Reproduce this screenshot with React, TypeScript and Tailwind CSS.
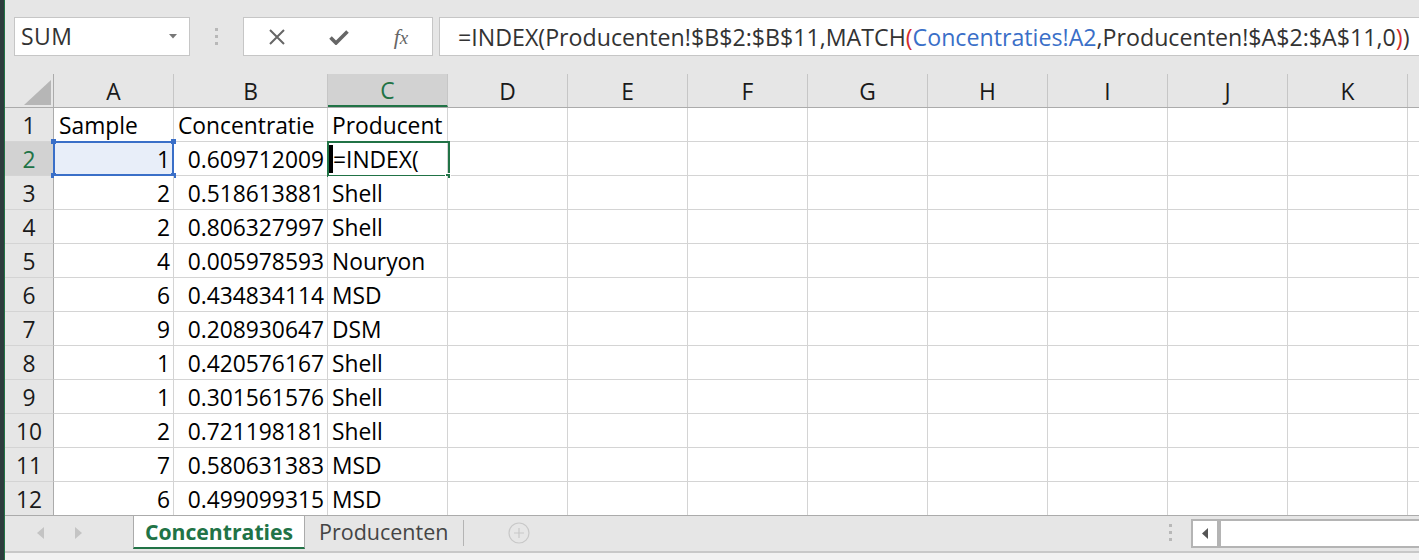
import React from 'react'

// sheet data
const rows: [number | string, string, string][] = [
  ['Sample', 'Concentratie', 'Producent'],
  [1, '0.609712009', '=INDEX('],
  [2, '0.518613881', 'Shell'],
  [2, '0.806327997', 'Shell'],
  [4, '0.005978593', 'Nouryon'],
  [6, '0.434834114', 'MSD'],
  [9, '0.208930647', 'DSM'],
  [1, '0.420576167', 'Shell'],
  [1, '0.301561576', 'Shell'],
  [2, '0.721198181', 'Shell'],
  [7, '0.580631383', 'MSD'],
  [6, '0.499099315', 'MSD'],
]

const colLetters = ['A', 'B', 'C', 'D', 'E', 'F', 'G', 'H', 'I', 'J', 'K']
const colWidths = ['w-[120px]', 'w-[154px]', 'w-[120px]', 'w-[120px]', 'w-[120px]', 'w-[120px]', 'w-[120px]', 'w-[120px]', 'w-[120px]', 'w-[120px]', 'w-[120px]']

const cellFont = "font-['Open_Sans',sans-serif] text-[22.8px]"
const uiFont = "font-['Open_Sans',sans-serif]"

const Toolbar = (): JSX.Element => (
  <div className="h-[74px] flex items-start pt-[17px] pl-[9px] bg-[#e6e6e6]">
    {/* name box */}
    <div className="w-[176px] h-[39px] bg-white border border-[#c6c6c6] flex items-center justify-between pl-[6px] pr-[12px]">
      <span className={`${uiFont} text-[23px] text-[#333] tracking-[0.4px]`}>SUM</span>
      <svg width="8" height="5" viewBox="0 0 8 5">
        <path d="M0 0 L8 0 L4 4.5 Z" fill="#777" />
      </svg>
    </div>
    {/* grip dots */}
    <div className="w-[53px] h-[39px] flex flex-col items-center justify-center gap-[4px]">
      <div className="w-[3px] h-[3px] bg-[#b8b8b8]" />
      <div className="w-[3px] h-[3px] bg-[#b8b8b8]" />
      <div className="w-[3px] h-[3px] bg-[#b8b8b8]" />
    </div>
    {/* cancel / enter / fx */}
    <div className="w-[190px] h-[39px] bg-white border border-[#c6c6c6] flex items-center">
      <div className="w-[64px] flex justify-center pl-[2px]">
        <svg width="18" height="18" viewBox="0 0 18 18">
          <path d="M2 2 L16 16 M16 2 L2 16" stroke="#666" strokeWidth="2" />
        </svg>
      </div>
      <div className="w-[62px] flex justify-center">
        <svg width="20" height="16" viewBox="0 0 20 16">
          <path d="M1.5 8.5 L7 14 L18.5 2.5" stroke="#666" strokeWidth="3.6" fill="none" strokeLinejoin="miter" />
        </svg>
      </div>
      <div className="w-[62px] flex justify-center">
        <span className="font-['Liberation_Serif',serif] italic text-[22px] text-[#666] leading-none">
          f<span className="text-[19px]">x</span>
        </span>
      </div>
    </div>
    {/* formula input */}
    <div className="flex-1 ml-[6px] h-[39px] bg-white border-y border-l border-[#c6c6c6] flex items-center pl-[18px] pt-[1px] overflow-hidden whitespace-nowrap">
      <span className={`${uiFont} text-[23.2px] text-[#333]`}>
        =INDEX(Producenten!$B$2:$B$11,MATCH<span className="text-[#d52b2b]">(</span>
        <span className="text-[#3a6fc8]">Concentraties!A2</span>,Producenten!$A$2:$A$11,0
        <span className="text-[#d52b2b]">)</span>)
      </span>
    </div>
  </div>
)

const HeaderRow = (): JSX.Element => (
  <div className="h-[34px] flex bg-[#e6e6e6] border-b border-[#ababab]">
    <div className="w-[49px] shrink-0 border-r border-[#ababab] flex items-end justify-end pr-[2px] pb-[2px]">
      <svg width="27" height="25" viewBox="0 0 27 25">
        <path d="M27 0 L27 25 L0 25 Z" fill="#b6b6b6" />
      </svg>
    </div>
    {colLetters.map((c, i) => (
      <div
        key={c}
        className={`${colWidths[i]} shrink-0 border-r ${
          c === 'C' ? 'bg-[#d2d2d2] text-[#217346] border-b-2 border-b-[#217346] border-r-[#c6c6c6]' : 'border-[#c6c6c6] text-[#1a1a1a]'
        } flex items-center justify-center pt-[3px] ${cellFont}`}
      >
        {c}
      </div>
    ))}
    <div className="flex-1" />
  </div>
)

const Grid = (): JSX.Element => (
  <div className="h-[407px] overflow-hidden">
    {rows.map((r, ri) => {
      const rowNo = ri + 1
      const isHeader = ri === 0
      return (
        <div key={ri} className="h-[34px] flex">
          <div
            className={`w-[49px] shrink-0 border-r border-r-[#ababab] border-b border-b-[#d4d4d4] flex items-center justify-center pt-[4px] ${cellFont} ${
              rowNo === 2 ? 'bg-[#d2d2d2] text-[#217346]' : 'bg-[#e6e6e6] text-[#1a1a1a]'
            }`}
          >
            {rowNo}
          </div>
          {/* A */}
          <div
            className={`relative w-[120px] shrink-0 border-r border-b border-[#d4d4d4] flex items-center pt-[4px] ${cellFont} text-black ${
              isHeader ? 'justify-start pl-[5px]' : 'justify-end pr-[3px]'
            } ${rowNo === 2 ? 'bg-[#e8eef9]' : 'bg-white'}`}
          >
            {r[0]}
            {rowNo === 2 && (
              <>
                <div className="absolute left-[-1px] top-[-1px] w-[121px] h-[35px] border-2 border-[#3a6fc8]" />
                <div className="absolute left-[-3px] top-[-3px] w-[5px] h-[5px] bg-[#3a6fc8]" />
                <div className="absolute right-[-3px] top-[-3px] w-[5px] h-[5px] bg-[#3a6fc8]" />
                <div className="absolute left-[-3px] bottom-[-3px] w-[5px] h-[5px] bg-[#3a6fc8]" />
                <div className="absolute right-[-3px] bottom-[-3px] w-[5px] h-[5px] bg-[#3a6fc8]" />
              </>
            )}
          </div>
          {/* B */}
          <div
            className={`w-[154px] shrink-0 border-r border-b border-[#d4d4d4] bg-white flex items-center pt-[4px] ${cellFont} text-black ${
              isHeader ? 'justify-start pl-[4px]' : 'justify-end pr-[3px]'
            }`}
          >
            {r[1]}
          </div>
          {/* C */}
          <div className={`relative w-[120px] shrink-0 border-r border-b border-[#d4d4d4] bg-white flex items-center pt-[4px] pl-[4px] ${cellFont} text-black`}>
            {rowNo === 2 ? <span className="pl-[1px]">{r[2]}</span> : r[2]}
            {rowNo === 2 && (
              <>
                <div className="absolute left-[-1px] top-[-1px] w-[123px] h-[36px] border-2 border-[#217346]" />
                <div className="absolute left-[1px] top-[3px] w-[4px] h-[28px] bg-black" />
                <div className="absolute right-[-4px] bottom-[-4px] w-[6px] h-[6px] bg-[#217346] border border-white" />
              </>
            )}
          </div>
          {colLetters.slice(3).map((c) => (
            <div key={c} className="w-[120px] shrink-0 border-r border-b border-[#d4d4d4] bg-white" />
          ))}
          <div className="flex-1 border-b border-[#d4d4d4] bg-white" />
        </div>
      )
    })}
  </div>
)

const TabBar = (): JSX.Element => (
  <div className="h-[36px] border-t border-[#ababab] bg-[#e6e6e6] flex items-start">
    <div className="w-[128px] h-[33px] flex items-center pl-[32px] gap-[31px]">
      <svg width="7" height="12" viewBox="0 0 7 12">
        <path d="M7 0 L7 12 L0 6 Z" fill="#c4c4c4" />
      </svg>
      <svg width="7" height="12" viewBox="0 0 7 12">
        <path d="M0 0 L0 12 L7 6 Z" fill="#c4c4c4" />
      </svg>
    </div>
    <div className={`w-[172px] h-[33px] bg-white border-x border-[#ababab] border-b-2 border-b-[#217346] flex items-center justify-center ${uiFont} text-[21.2px] font-bold text-[#217346]`}>
      Concentraties
    </div>
    <div className={`h-[33px] flex items-center pl-[14px] pr-[15px] ${uiFont} text-[21.5px] text-[#444]`}>Producenten</div>
    <div className="w-px h-[26px] mt-[4px] bg-[#b4b4b4]" />
    <div className="h-[33px] flex items-center pl-[44px]">
      <svg width="22" height="22" viewBox="0 0 22 22">
        <circle cx="11" cy="11" r="10" stroke="#c8c8c8" strokeWidth="1.2" fill="none" />
        <path d="M11 6 L11 16 M6 11 L16 11" stroke="#c8c8c8" strokeWidth="1.2" />
      </svg>
    </div>
    <div className="flex-1" />
    <div className="h-[33px] flex flex-col items-center justify-center gap-[4px] mr-[19px]">
      <div className="w-[3px] h-[3px] bg-[#b8b8b8]" />
      <div className="w-[3px] h-[3px] bg-[#b8b8b8]" />
      <div className="w-[3px] h-[3px] bg-[#b8b8b8]" />
    </div>
    <div className="w-[228px] h-[29px] mt-[3px] border-2 border-r-0 border-[#b4b4b4] bg-white flex">
      <div className="w-[24px] h-full flex items-center justify-center">
        <svg width="6" height="11" viewBox="0 0 6 11">
          <path d="M6 0 L6 11 L0 5.5 Z" fill="#555" />
        </svg>
      </div>
      <div className="w-[4px] h-full bg-[#b4b4b4]" />
      <div className="flex-1" />
    </div>
  </div>
)

const App = (): JSX.Element => {
  return (
    <div className="w-[1419px] h-[560px] flex overflow-hidden bg-[#e6e6e6]">
      <div className="w-[5px] shrink-0 bg-[#2d3c3d] border-r border-[#217346]" />
      <div className="flex-1 flex flex-col min-w-0">
        <Toolbar />
        <HeaderRow />
        <Grid />
        <TabBar />
        <div className="h-[9px] border-t-2 border-[#c8c8c8] bg-[#f2f2f2]" />
      </div>
    </div>
  )
}

export default App
